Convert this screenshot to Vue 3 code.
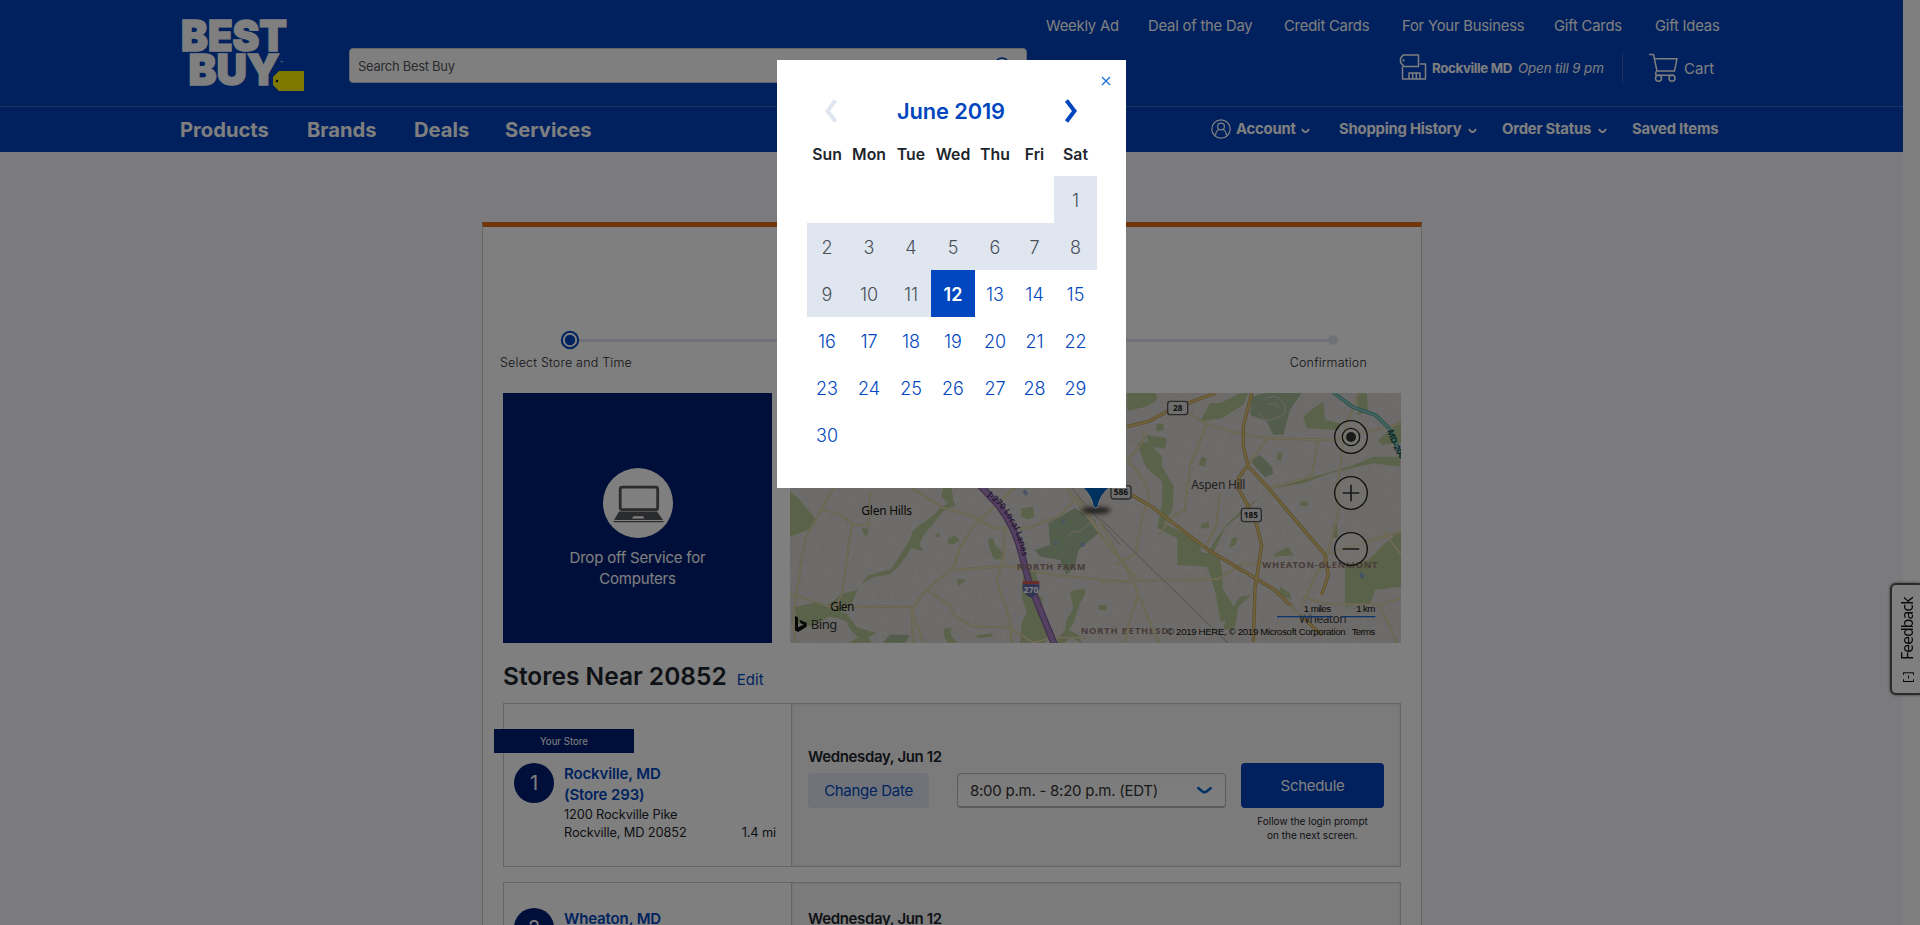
<script setup>
const topLinks = ['Weekly Ad', 'Deal of the Day', 'Credit Cards', 'For Your Business', 'Gift Cards', 'Gift Ideas']
const mainLinks = ['Products', 'Brands', 'Deals', 'Services']
const dayNames = ['Sun', 'Mon', 'Tue', 'Wed', 'Thu', 'Fri', 'Sat']
const firstOffset = 6
const today = 12
const cells = Array.from({ length: 42 }, (_, i) => {
  const n = i - firstOffset + 1
  return n >= 1 && n <= 30 ? n : null
})
const cellClass = (n) => ({ past: n && n < today, today: n === today })
const stores = [
  { id: 1, name: 'Rockville, MD', store: '(Store 293)', street: '1200 Rockville Pike', city: 'Rockville, MD 20852', miles: '1.4 mi', mine: true },
  { id: 2, name: 'Wheaton, MD', store: '', street: '', city: '', miles: '', mine: false }
]
</script>

<template>
  <div class="screen">
    <div class="page">
      <header class="header">
        <div class="top">
          <svg class="logo" width="126" height="78" viewBox="180 17 126 78">
            <g class="logo-text">
              <text x="181" y="50.500" textLength="106" lengthAdjust="spacingAndGlyphs">BEST</text>
              <text x="188.500" y="85" textLength="91" lengthAdjust="spacingAndGlyphs">BUY</text>
            </g>
            <path d="M279 71h25v20h-25l-6-6v-8z" fill="#fff200" />
            <circle cx="277" cy="81" r="1.300" fill="#0b1530" />
            <text x="280" y="65" class="tm">™</text>
          </svg>
          <div class="search">
            <span>Search Best Buy</span>
            <svg width="18" height="18" viewBox="0 0 18 18" fill="none" stroke="#0046be" stroke-width="1.600"><circle cx="9" cy="8" r="7" /><path d="M13 13l4 4" /></svg>
          </div>
          <div class="top-right">
            <nav class="top-links"><a v-for="l in topLinks" :key="l">{{ l }}</a></nav>
            <div class="store-row">
              <svg width="30" height="28" viewBox="1399 54 30 28" fill="none" stroke="#fff" stroke-width="1.500" stroke-linejoin="round">
                <path d="M1403 55h15.500v11.500H1404l-3.500-4v-4z" /><path d="M1420 64h5.500v15h-23V66.500M1409 79v-6h11v6M1412.700 73v6M1416.300 73v6" /><circle cx="1403.500" cy="60.500" r=".4" />
              </svg>
              <b>Rockville MD</b><i>Open till 9 pm</i>
              <span class="sep"></span>
              <svg class="cart" width="30" height="30" viewBox="1648 55 30 30" fill="none" stroke="#fff" stroke-width="1.500" stroke-linejoin="round">
                <path d="M1649 56.500h4.500l3.500 16.500h17.500l2.500-12.300h-22M1656.500 73q-2 4.300.5 4.300h17" /><circle cx="1658.500" cy="80.300" r="3" /><circle cx="1672" cy="80.300" r="3" />
              </svg>
              <span class="cart-label">Cart</span>
            </div>
          </div>
        </div>
        <div class="bar">
          <nav class="main-links"><a v-for="l in mainLinks" :key="l">{{ l }}</a></nav>
          <nav class="user-links">
            <svg width="20" height="20" viewBox="0 0 20 20" fill="none" stroke="#fff" stroke-width="1.200"><circle cx="10" cy="10" r="9.200" /><circle cx="10" cy="7.500" r="3.400" /><path d="M4.500 16.500q.5-5 3.500-6M15.500 16.500q-.5-5-3.500-6" /></svg>
            <a>Account</a><svg class="caret" width="9" height="6" viewBox="0 0 9 6"><path d="M1 1q1.500 3 3.500 3t3.500-3" /></svg>
            <a>Shopping History</a><svg class="caret" width="9" height="6" viewBox="0 0 9 6"><path d="M1 1q1.500 3 3.500 3t3.500-3" /></svg>
            <a>Order Status</a><svg class="caret" width="9" height="6" viewBox="0 0 9 6"><path d="M1 1q1.500 3 3.500 3t3.500-3" /></svg>
            <a>Saved Items</a>
          </nav>
        </div>
      </header>

      <main class="card">
        <svg class="steps" width="938" height="20" viewBox="483 330 938 20">
          <path d="M579 340.500H1333" stroke="#dfe6f0" stroke-width="3" />
          <circle cx="1333" cy="340" r="5" fill="#dfe6f0" />
          <circle cx="570" cy="340" r="8.200" fill="#fff" stroke="#0046be" stroke-width="2" />
          <circle cx="570" cy="340" r="5.200" fill="#0046be" />
        </svg>
        <div class="step-labels"><span>Select Store and Time</span><span class="last">Confirmation</span></div>

        <div class="hero">
          <div class="tile">
            <svg width="70" height="70" viewBox="0 0 70 70">
              <circle cx="35" cy="35" r="35" fill="#fff" />
              <rect x="17.200" y="19.200" width="37.500" height="22.500" rx="2" fill="none" stroke="#55565a" stroke-width="2.800" />
              <path d="M16 43.500h38l6 8.500H11z" fill="#55565a" /><path d="M30.500 48.200h9.500l1.500 2.300H29z" fill="#fff" /><path d="M10.500 53.700h50" stroke="#55565a" stroke-width="1.200" />
            </svg>
            <p>Drop off Service for<br>Computers</p>
          </div>
          <svg class="map" width="611" height="250" viewBox="790 393 611 250">
            <defs>
              <path id="lanes" d="M620 348Q703 405 727 530L732 560" />
              <path id="md" d="M862 152Q880 215 910 245L950 275" />
              <pattern id="streets" width="34" height="30" patternUnits="userSpaceOnUse" patternTransform="rotate(17)">
                <path d="M0 6h34M7 0v30M0 19q16-5 34 0M22 6q4 9-1 24" fill="none" stroke="#e6e3df" stroke-width=".6" />
              </pattern>
              <filter id="soft" x="-50%" y="-50%" width="200%" height="200%"><feGaussianBlur stdDeviation="7" /></filter>
            </defs>
            <rect x="790" y="393" width="611" height="250" fill="#dad6d2" />
            <rect x="790" y="393" width="611" height="250" fill="url(#streets)" />
            <g transform="translate(780 380) scale(.33333)">
              <g fill="#b4c592">
                <path d="M30 335l25 20 50 60q5 15-10 30l-65 25zM480 385l38-25 10 15-40 20-60 75-10 25 12 18-35-8-35 50-30 28-50 8-40 25-30 65-50 25-60-5q60-35 85-60l45-10 35-45 70-20 50-80 15-35 60-45z" />
                <path d="M45 680l60-12 60 25 35 8 30 40 60 18-25 12 10 17-30-8q-35-25-45-55l-25-10-30-5-45 30-50-10z" />
                <path d="M205 788l40-20 30 20zM625 478l15-5 5 22 25 25-5 18h-20q-18-20-20-60zM505 475l20-8 15 15-25 12-12-5zM725 385l35-5 2 30-15 8-25-8zM470 460l8 0 0 12-10-2zM490 324h25l5 35-15 10-22-20zM245 445l20 0-2 20-10 2z" />
                <path d="M730 575l35-5 8 30-20 25 35 30-5 30 20 80-8 23h-75l5-60 15-30-15-50zM870 635l45-10 0 20-15 25-20 60-15 20 30 15 10 25-30-18-40 28-10-15 30-35 5-30 20-35zM590 765l50-5-5 10-45 5zM495 745l20 0q-10 25 20 43h-30q-20-20-10-43zM530 597l30 2-25 20zM955 675h25v15h-22z" />
              </g>
              <path d="M805 430l80-45 60 35 10 40-60 50-10 50-25 25-20-45-60-10-15-20 45-15zM310 788l20-25 60 3-15 22z" fill="#a4ba96" />
              <path d="M860 470l20-15h20l40-35" fill="none" stroke="#cbc8ba" stroke-width="4" />
              <path d="M727 334l8-6 10 12-8 8zM843 422l8-6 6 8-8 6zM822 488l10-4 0 12-8 3zM900 490l12-4 4 12-12 4z" fill="#93a8c8" />
              <g fill="none" stroke="#c6c09a" stroke-width="7" stroke-linejoin="round">
                <path d="M160 324L75 475 40 700 45 788M115 385l70 20 35 30h45l5-100M215 435l-30 210-25 50M30 640l120 40 245 0M395 324l95 60 90 25 60 35h105l90-35 60-60 70 120M430 788l-35-100 45-60 80-65 20-60 40-65 130-120M525 570l155-12 150 28 220 20M675 450l-5 90-20 60 40 120 5 68M440 628l70 50 15 30 50 30 115 5 70 45 60-15 100 0M395 690l5 98M860 324l130 180 80 90" />
              </g>
              <g fill="none" stroke="#e2dab2" stroke-width="4" stroke-linejoin="round">
                <path d="M160 324L75 475 40 700 45 788M115 385l70 20 35 30h45l5-100M215 435l-30 210-25 50M30 640l120 40 245 0M395 324l95 60 90 25 60 35h105l90-35 60-60 70 120M430 788l-35-100 45-60 80-65 20-60 40-65 130-120M525 570l155-12 150 28 220 20M675 450l-5 90-20 60 40 120 5 68M440 628l70 50 15 30 50 30 115 5 70 45 60-15 100 0M395 690l5 98M860 324l130 180 80 90" />
              </g>
              <path d="M600 316L650 370Q705 435 727 530L745 600 785 700 824 795" fill="none" stroke="#7c5c98" stroke-width="21" />
              <path d="M600 316L650 370Q705 435 727 530L745 600 785 700 824 795" fill="none" stroke="#a880c2" stroke-width="14" />
              <text class="lanes"><textPath href="#lanes">I-270 Local Lanes</textPath></text>
              <path d="M875 324l145 170" stroke="#aaa6ad" stroke-width="3" />
              <path d="M728 603h50v10h-50z" fill="#d55a55" /><path d="M728 613h50q5 28-25 41-30-13-25-41z" fill="#6268a8" />
              <text x="753" y="640" class="shield">270</text>
              <text x="244" y="405" class="place" textLength="152">Glen Hills</text>
              <text x="151" y="693" class="place" textLength="72">Glen</text>
              <text x="710" y="570" class="area" textLength="207">NORTH FARM</text>
              <text x="902" y="762" class="area" textLength="262">NORTH BETHESD</text>
              <path d="M45 708l9 4v30l17-8-9-4-4-11 22 9v12l-26 16-9-5z" fill="#111" />
              <text x="92" y="747" class="bing" textLength="80">Bing</text>
            </g>
            <g transform="translate(1100 380) scale(.33333)">
              <g fill="#b4c592">
                <path d="M82 39h80q20 10 0 28l-30 15-50 10zM112 190l30-5 45 45 0 30 35 60-5 70-25 40 60 30 50 25 0 30 55 15 10 45 0 50 35 55 5 30-45 15-15-85-25-80-90-5 0-80-60-30 15-80 0-60-50-45zM170 130l20 2 0 18-22 5zM140 165l60 10-5 32-50-10z" />
                <path d="M320 525q40-80 100-130l100-70 90-15 80-30 130-30 80 10V230l-80 0-60 25-80 25-150 35-75 60-80 70-35 75zM610 110l30-25 30-20 5 55 45 10 0 20-100-5zM360 70l60-30h25l-15 35-65 40-65 10 30-55zM735 555l70-15 50-50 50-40v170l-80 10-20 60h-70zM835 180l68-60v70l-60 5zM770 40h30l5 55-30 10zM305 230l15 5-5 25-20-5zM535 215l12 5-5 25-12-7zM305 430l22-5v20h-25zM395 475l18-3-5 20-20 12zM525 520l40-20 15 25-60 5zM540 620l30 20 5 20-40-18zM370 740l20-45 30-45 35-5-40 35-10 60-30 10zM700 430l10 0 5 45-20-3zM600 365h25v12h-25zM0 675h20v15H0z" />
              </g>
              <path d="M455 50l40-11h110l-35 50-20 75-30 0-20-40-50-20zM480 225l35 35 5 20-25 12-45-50z" fill="#a4ba96" />
              <path d="M490 60q40-25 60 10t-25 45q-35 15-45-15M500 75q30-10 35 10" fill="none" stroke="#ccc8b8" stroke-width="4" />
              <path d="M777 583l8-8 8 12-6 13z" fill="#88a2c8" />
              <g fill="none" stroke="#c6c09a" stroke-width="7" stroke-linejoin="round">
                <path d="M82 240q60-60 50-90M82 245q60 50 65 110l-20 55-20 110-60 35M265 100l60 35 90 25 90 15 195 5 203-50M320 135l-20 50-30 70-15 135-40 20-40 60M440 260l70-95M510 325l125-35 20-110M775 39l-40 110-20 150 0 100-35 130-40 70-40 90M0 605l355-8 70-45 60 0M690 520l60-20 153-45M850 453l53 70M610 650l60 20 170 5 63-20M840 680l30 60 20 48M0 425l100 180 75 183M75 788q10-60 40-145M360 340l-10 90-35 80" />
              </g>
              <g fill="none" stroke="#e2dab2" stroke-width="4" stroke-linejoin="round">
                <path d="M82 240q60-60 50-90M82 245q60 50 65 110l-20 55-20 110-60 35M265 100l60 35 90 25 90 15 195 5 203-50M320 135l-20 50-30 70-15 135-40 20-40 60M440 260l70-95M510 325l125-35 20-110M775 39l-40 110-20 150 0 100-35 130-40 70-40 90M0 605l355-8 70-45 60 0M690 520l60-20 153-45M850 453l53 70M610 650l60 20 170 5 63-20M840 680l30 60 20 48M0 425l100 180 75 183M75 788q10-60 40-145M360 340l-10 90-35 80" />
              </g>
              <g fill="none" stroke-linejoin="round">
                <path d="M82 140l60-15 80-40 125-46M455 39l-25 100 0 60 15 60 60 65 80 95 90 105 10 60-20 60M440 260l-25 35 0 30 50 90 20 80-20 130-5 160M95 345l60 35 170 130 200 120 60 60 80 75" stroke="#b5984e" stroke-width="10" />
                <path d="M82 140l60-15 80-40 125-46M455 39l-25 100 0 60 15 60 60 65 80 95 90 105 10 60-20 60M440 260l-25 35 0 30 50 90 20 80-20 130-5 160M95 345l60 35 170 130 200 120 60 60 80 75" stroke="#dfc578" stroke-width="6" />
                <path d="M698 36l60 45 70 25 40 40 40 90" stroke="#4fa19e" stroke-width="11" /><path d="M698 36l60 45 70 25 40 40 40 90" stroke="#8bcac5" stroke-width="6" />
              </g>
              <path d="M0 415l385 375" stroke="#a4a2a4" stroke-width="3" />
              <text class="lanes md"><textPath href="#md">MD-200</textPath></text>
              <g class="route"><rect x="203" y="64" width="60" height="40" rx="8" /><rect x="33" y="317" width="60" height="40" rx="8" /><rect x="424" y="385" width="60" height="40" rx="8" /></g>
              <g class="num"><text x="233" y="94">28</text><text x="63" y="346">586</text><text x="453" y="415">185</text></g>
              <text x="274" y="327" class="place dim" textLength="162">Aspen Hill</text>
              <text x="487" y="564" class="area" textLength="345">WHEATON-GLENMONT</text>
              <text x="597" y="729" class="place dim" textLength="143">Wheaton</text>
              <path d="M530 676h300v31H530z" fill="#dad6d2" fill-opacity=".75" />
              <ellipse cx="-12" cy="391" rx="44" ry="11" fill="#222" fill-opacity=".8" filter="url(#soft)" />
              <path d="M-58 316Q-24 345 -20 380q7 9 14 0Q-2 345 35 316z" fill="#0064c0" stroke="#eee" stroke-width="3" />
              <path d="M531 710h163M726 710h100" stroke="#1464d8" stroke-width="4" />
              <g class="legal"><text x="611" y="696" textLength="82">1 miles</text><text x="769" y="696" textLength="57">1 km</text><text x="201" y="765" textLength="536">© 2019 HERE, © 2019 Microsoft Corporation</text><text x="755" y="765" textLength="71">Terms</text></g>
              <g fill="#fff" fill-opacity=".25" stroke="#222" stroke-width="4"><circle cx="753" cy="171" r="49" /><circle cx="753" cy="339" r="49" /><circle cx="753" cy="507" r="49" /><circle cx="753" cy="171" r="26" /></g>
              <circle cx="753" cy="171" r="15" fill="#333" /><path d="M728 339h50M753 314v50M728 507h50" stroke="#333" stroke-width="5" />
            </g>
          </svg>
        </div>

        <h2>Stores Near 20852 <a>Edit</a></h2>

        <section v-for="s in stores" :key="s.id" class="store" :class="{ mine: s.mine }">
          <div class="info">
            <div v-if="s.mine" class="ribbon">Your Store</div>
            <div class="who">
              <span class="badge">{{ s.id }}</span>
              <div class="address">
                <strong>{{ s.name }}<br>{{ s.store }}</strong>
                <p>{{ s.street }}</p>
                <p class="city">{{ s.city }}<span>{{ s.miles }}</span></p>
              </div>
            </div>
          </div>
          <div class="booking">
            <div class="when">
              <b>Wednesday, Jun 12</b>
              <button v-if="s.mine" class="change">Change Date</button>
            </div>
            <template v-if="s.mine">
              <div class="select"><span>8:00 p.m. - 8:20 p.m. (EDT)</span><svg width="17" height="9" viewBox="0 0 17 9"><path d="M1.500 1.500L6.500 5.500q2 1.500 4 0L15.500 1.500" fill="none" stroke="#0064c8" stroke-width="2.600" /></svg></div>
              <div class="go"><button>Schedule</button><p>Follow the login prompt<br>on the next screen.</p></div>
            </template>
          </div>
        </section>
      </main>
    </div>
    <div class="gutter"></div>
    <div class="feedback"><span class="mark">[-]</span><span>Feedback</span></div>
    <div class="overlay"></div>

    <div class="modal">
      <svg class="close" width="10" height="10" viewBox="0 0 10 10"><path d="M1 1l8 8M9 1l-8 8" stroke="#1a6fd0" stroke-width="1.300" /></svg>
      <div class="month">
        <svg width="14" height="24" viewBox="0 0 14 24"><path d="M11.500 1.500L3.500 12l8 10.500" fill="none" stroke="#dfe6f0" stroke-width="4" /></svg>
        <h3>June 2019</h3>
        <svg width="14" height="24" viewBox="0 0 14 24"><path d="M2.500 1.500L10.500 12l-8 10.500" fill="none" stroke="#0046be" stroke-width="4" /></svg>
      </div>
      <div class="grid names"><span v-for="d in dayNames" :key="d">{{ d }}</span></div>
      <div class="grid days"><span v-for="(n, i) in cells" :key="i" :class="cellClass(n)">{{ n }}</span></div>
    </div>
  </div>
</template>

<style scoped>
* { box-sizing: border-box; }
p, h2, h3 { margin: 0; }
button { border: 0; font-family: inherit; padding: 0; }
.screen { position: relative; width: 1920px; height: 925px; overflow: hidden; display: flex; background: #fff; font-family: Inter, "Liberation Sans", sans-serif; color: #1d252c; white-space: nowrap; }
.page { width: 1903px; height: 925px; background: #f6f7fb; overflow: hidden; }
.gutter { width: 17px; background: #fff; }
.header { height: 152px; background: #0042bc; color: #fff; }
.top { height: 107px; border-bottom: 1px solid #3c67c4; display: flex; padding-left: 180px; }
.logo { margin-top: 17px; flex: none; overflow: visible; }
.logo-text { font: 900 43px Inter, sans-serif; fill: #fff; stroke: #fff; stroke-width: 1.5; }
.tm { font: 5px Inter, sans-serif; fill: #fff; }
.search { margin: 48px 0 0 43px; width: 678px; height: 35px; background: #fff; border: 1px solid #c5cbd5; border-radius: 4px; display: flex; align-items: center; justify-content: space-between; padding: 0 15px 0 8px; font-size: 13px; color: #55585c; flex: none; letter-spacing: -.3px; }
.top-right { margin-left: 19px; width: 700px; }
.top-links { display: grid; grid-template-columns: 102px 136px 118px 152px 101px 80px; margin-top: 16px; font-size: 14.8px; line-height: 20px; letter-spacing: -.2px; }
.store-row { display: flex; align-items: center; margin: 15px 0 0 353px; height: 34px; font-size: 13.3px; }
.store-row b { width: 86px; margin-left: 3px; letter-spacing: -.35px; }
.store-row i { width: 104px; letter-spacing: -.1px; }
.sep { width: 1px; height: 30px; background: #3c67c4; }
.cart { margin-left: 25px; }
.cart-label { margin-left: 6px; font-size: 15px; }
.bar { height: 45px; display: flex; justify-content: space-between; align-items: center; padding: 0 182px 1px 180px; }
.main-links { display: grid; grid-template-columns: 127px 107px 91px 100px; font-size: 20.2px; font-weight: 700; }
.user-links { display: grid; grid-template-columns: 25px 65px 38px 129px 34px 96px 34px 89px; align-items: center; font-size: 14.8px; font-weight: 700; letter-spacing: -.2px; }
.caret { fill: none; stroke: #fff; stroke-width: 1.8; margin-top: 4px; }
.card { width: 940px; height: 740px; margin: 70px 0 0 482px; background: #fff; border: 1px solid #c5cbd5; border-top: 5px solid #e06a10; }
.steps { display: block; margin-top: 103px; }
.step-labels { display: flex; justify-content: space-between; padding: 4px 54px 0 17px; font-size: 12.5px; font-weight: 300; line-height: 18px; letter-spacing: .2px; }
.hero { display: flex; gap: 18px; margin: 21px 20px 0; }
.tile { width: 269px; height: 250px; background: #001e73; color: #fff; text-align: center; padding-top: 75px; font-size: 15px; line-height: 21px; }
.tile p { margin-top: 9px; letter-spacing: -.2px; }
.tile svg { display: block; margin: 0 auto; }
.map { flex: none; }
.place { font: 36px "Noto Sans", sans-serif; fill: #111; }
.place.dim { fill: #444; }
.area { font: 700 28px "Noto Sans", sans-serif; fill: #907870; }
.bing { font: 39px "Noto Sans", sans-serif; fill: #333; }
.shield { font: 700 26px "Noto Sans", sans-serif; fill: #fff; text-anchor: middle; }
.lanes { font: 600 26px "Noto Sans", sans-serif; fill: #4b2d68; }
.md { fill: #114444; }
.route rect { fill: #ddd; stroke: #555; stroke-width: 4; }
.num text { font: 700 25px "Noto Sans", sans-serif; fill: #222; text-anchor: middle; }
.legal text { font: 29px "Liberation Sans", sans-serif; fill: #111; }
h2 { margin: 17px 0 0 20px; font-size: 24.5px; font-weight: 600; line-height: 32px; height: 43px; }
h2 a { font-size: 15px; font-weight: 400; color: #0046be; margin-left: 4px; }
.store { margin: 0 20px 15px; width: 898px; height: 164px; border: 1px solid #c5cbd5; display: flex; }
.info { width: 287px; padding-top: 25px; }
.ribbon { width: 140px; height: 24px; line-height: 25px; margin: 0 0 10px -10px; background: #001e73; color: #fff; text-align: center; font-size: 9.7px; }
.who { display: flex; padding-left: 10px; }
.badge { width: 40px; height: 40px; border-radius: 50%; background: #001e73; color: #fff; text-align: center; line-height: 41px; font-size: 20px; flex: none; }
.address { margin-left: 10px; font-size: 12.8px; line-height: 18px; width: 212px; letter-spacing: -.13px; }
.address strong { display: block; font-size: 15px; font-weight: 600; line-height: 21px; color: #0046be; height: 42px; margin-bottom: 1px; }
.city { display: flex; justify-content: space-between; }
.booking { flex: 1; display: flex; background: #f7f7f7; border-left: 1px solid #c5cbd5; box-shadow: inset 0 0 3px #d5d8dd; padding-left: 16px; }
.when { width: 149px; padding-top: 42px; }
.when b { display: block; font-size: 15px; font-weight: 600; line-height: 22px; margin-bottom: 5px; letter-spacing: -.35px; }
.store:not(.mine) .when { padding-top: 25px; }
.change { width: 121px; height: 35px; border-radius: 4px; background: #dfe6f2; color: #0046be; font-size: 15px; letter-spacing: -.3px; }
.select { margin-top: 69px; width: 269px; height: 35px; border: 1px solid #b5b8bc; border-bottom-width: 2px; border-radius: 4px; background: linear-gradient(#f5f5f5, #fff); display: flex; align-items: center; justify-content: space-between; padding: 0 12px; font-size: 15px; letter-spacing: -.25px; color: #333; flex: none; }
.go { margin: 59px 0 0 15px; width: 143px; text-align: center; font-size: 10px; line-height: 14px; }
.go button { width: 143px; height: 45px; border-radius: 4px; background: #0042bc; color: #fff; font-size: 15px; letter-spacing: -.3px; display: block; margin-bottom: 6px; }
.feedback { position: absolute; left: 1890px; top: 583px; width: 34px; height: 112px; background: #fff; border: 2px solid #555; border-radius: 6px; box-shadow: 0 0 3px #666; writing-mode: vertical-rl; transform: rotate(180deg); font: 15.5px "Noto Sans", sans-serif; letter-spacing: -.8px; display: flex; align-items: center; gap: 11px; padding: 10px 0 0 0; color: #111; }
.mark { font-size: 12px; letter-spacing: 0; }
.overlay { position: absolute; inset: 0; background: rgba(0, 0, 0, .5); }
.modal { position: absolute; left: 777px; top: 60px; width: 349px; height: 428px; background: #fff; }
.close { position: absolute; right: 15px; top: 16px; }
.month { display: flex; justify-content: space-between; align-items: center; padding: 38px 48px 0 47px; height: 64px; }
.month h3 { font-size: 21.8px; font-weight: 600; color: #0046be; letter-spacing: -.1px; }
.grid { display: grid; grid-template-columns: 40px 44px 40px 44px 40px 39px 43px; margin-left: 30px; text-align: center; }
.names { height: 52px; line-height: 62px; font-size: 15.8px; font-weight: 600; }
.names span { display: flex; justify-content: center; }
.days { grid-auto-rows: 47px; line-height: 49px; font-size: 18px; color: #0046be; font-weight: 350; }
.days span { height: 47px; }
.past { background: #dfe6f0; color: #4a5058; font-weight: 300; }
.today { background: #0046be; color: #fff; font-weight: 600; }
</style>

<style>
html, body { margin: 0; overflow: hidden; }
</style>
